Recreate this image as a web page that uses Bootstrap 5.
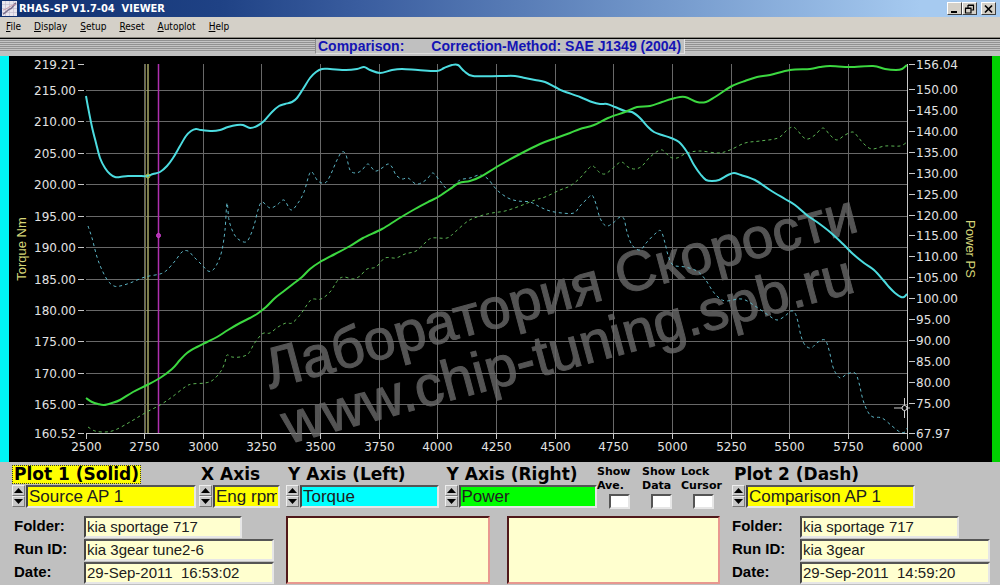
<!DOCTYPE html>
<html lang="en">
<head>
<meta charset="utf-8">
<meta name="viewport" content="width=device-width, initial-scale=1">
<title>RHAS-SP V1.7-04 VIEWER</title>
<link href="https://cdn.jsdelivr.net/npm/bootstrap@5.3.0/dist/css/bootstrap.min.css" rel="stylesheet">
<style>
body{background:#c0c0c0;color:#000;font-family:"Liberation Sans",Arial,sans-serif;min-height:100vh;overflow-x:hidden}
.titlebar{height:17px;padding-left:2px;gap:2px;background:linear-gradient(90deg,#10306f 0%,#1f4285 22%,#3a5d9f 36%,#7398cb 66%,#a6caf0 92%,#a6caf0 100%);font:bold 11px/17px "DejaVu Sans Condensed","DejaVu Sans",sans-serif;color:#fff;white-space:pre}
.win-btn{width:15px;height:13px;padding:0;background:#d4d0c8;border:1px solid;border-color:#fff #404040 #404040 #fff;line-height:0}
.win-btn svg,.spin button svg{display:block;margin:auto}
.menubar{height:21px;background:#d4d0c8;border-bottom:1px solid #8a877f;padding-left:6px;gap:13px;font:10px/20px "DejaVu Sans Condensed","DejaVu Sans",sans-serif}
.menubar a{color:#000;text-decoration:none}
.strip{height:18px;border-top:1px solid #000;background:#c0c0c0}
.ridges{height:13px;background:repeating-linear-gradient(180deg,#c4c4c4 0 1px,#929292 1px 2px)}
.method{height:15px;padding:0 3px 0 2px;border-left:1px solid #8a8a8a;border-right:1px solid #e4e4e4;border-bottom:1px solid #dcdcdc;color:#1414b4;font-weight:bold;font-size:14px;line-height:14px;white-space:nowrap}
.method span:last-child{margin-left:27px}
.edge-l{width:9px;background:#00f6f6}
.edge-r{width:8px;background:#00d000}
.plot{background:#000}
.plot svg{display:block;width:100%;height:auto}
.plot text{fill:#e2e2e2;font:12px "DejaVu Sans",sans-serif}
.plot .axis-name{fill:#d6d678;font:13px "Liberation Sans",sans-serif}
.plot .wm{fill:#6a6a6a;stroke:#6a6a6a;stroke-width:1;opacity:.8;font:57px "Liberation Sans",sans-serif}
.grid-line{stroke:#686868;stroke-width:1}
.axis-line{stroke:#c8c8c8;stroke-width:1}
.curve{fill:none;stroke-width:2;stroke-linejoin:round}
.dashed{stroke-width:1;stroke-dasharray:3 3}
.panel{display:grid;grid-template-columns:268fr 440fr 258fr;column-gap:6px;row-gap:7px;padding:3px 10px 1px 12px}
.rings-left{gap:3px}
.ring-name{height:19px;margin-bottom:1px;font:bold 17px/18px "DejaVu Sans",sans-serif;white-space:nowrap;display:block}
.ring-name span{display:inline-block;height:19px;padding:0 2px}
.ring-name .picked{background:#ff0;outline:1px dotted #333;outline-offset:-1px}
.spin{width:14px;flex:none}
.spin button{display:block;width:13px;height:11px;padding:0;background:#c8c8c8;border:1px solid;border-color:#eee #777 #777 #eee}
.sunk{border:2px solid;border-color:#555 #e6e6e6 #e6e6e6 #444;border-radius:0;color:#202020;min-width:0;width:100%}
.ring-value{height:23px;font-size:17px;padding:0 1px}
.f-yellow{background:#ff0}.f-cyan{background:#0ff}.f-green{background:#0f0}
.w-plot{flex:184 1 0;min-width:0}.w-x{flex:81 1 0;min-width:0}.w-checks{flex:129 1 0;min-width:0}
.w-pair{flex:311 1 0;min-width:0;display:grid;grid-template-columns:1fr 1fr;column-gap:6px}
.w-rest{flex:75 1 0}
.checks{display:grid;grid-template-columns:45fr 39fr 45fr;font:bold 11px/14px "DejaVu Sans",sans-serif}
.checks label{white-space:nowrap;margin-bottom:1px}
.tick{appearance:none;width:21px;height:15px;margin:0 auto;background:#fff;border:2px solid;border-color:#555 #e6e6e6 #e6e6e6 #555;display:block}
.tick:checked{background:#333}
.info{display:grid;grid-template-columns:72fr 158fr 32fr 6fr;row-gap:1px;font-size:15px}
.info.right{grid-template-columns:68fr 159fr 31fr 0fr}
.info label{grid-column:1;font-weight:bold;line-height:20px;padding-left:2px;white-space:nowrap}
.info.right label{padding-left:0}
.info input{height:22px;background:#ffffcf;padding:0 1px;font-size:15px;grid-column:2/4}
.info input.short{grid-column:2/3}
.notes{display:grid;grid-template-columns:205fr 214fr;column-gap:17px;margin-right:6px}
.notes textarea{resize:none;background:#ffffcf;border:2px solid;border-color:#50181a #e89890 #e89890 #50181a;border-radius:0;height:68px;width:100%;display:block}
</style>
</head>
<body>
<header>
  <div class="titlebar d-flex align-items-center">
    <svg class="flex-shrink-0" width="15" height="15" viewBox="0 0 15 15" aria-hidden="true">
      <rect width="15" height="15" fill="#e9e6ee"/><path d="M3.500 0V15M7.500 0V15M11.500 0V15M0 3.500H15M0 7.500H15M0 11.500H15" stroke="#bdb8cc" stroke-width=".6"/>
      <path d="M1 13C4 12 5 9 8 8S11 4 14 2" fill="none" stroke="#7b6f8c" stroke-width="1.600"/><path d="M1 9C4 9 6 6 9 5S12 3 14 4" fill="none" stroke="#c99aa8"/>
    </svg>
    <span>RHAS-SP V1.7-04  VIEWER</span>
    <div class="ms-auto d-flex pe-1">
      <button class="win-btn" aria-label="Minimize"><svg width="11" height="10" viewBox="0 0 11 10"><path d="M2 8H8" stroke="#000" stroke-width="2"/></svg></button>
      <button class="win-btn me-1" aria-label="Restore"><svg width="11" height="10" viewBox="0 0 11 10"><path d="M4 4V1.500H9.500V6H7.500M4 1H10" fill="none" stroke="#000" stroke-width="1.200"/><path d="M1.500 4.500H7V9H1.500ZM1 4H7.500" fill="none" stroke="#000" stroke-width="1.200"/></svg></button>
      <button class="win-btn" aria-label="Close"><svg width="11" height="10" viewBox="0 0 11 10"><path d="M2 1.500L9 8.500M9 1.500L2 8.500" stroke="#000" stroke-width="1.700"/></svg></button>
    </div>
  </div>
  <nav class="menubar d-flex">
    <a href="#"><u>F</u>ile</a><a href="#"><u>D</u>isplay</a><a href="#"><u>S</u>etup</a><a href="#"><u>R</u>eset</a><a href="#"><u>A</u>utoplot</a><a href="#"><u>H</u>elp</a>
  </nav>
  <div class="strip d-flex">
    <div class="ridges flex-grow-1"></div>
    <div class="method"><span>Comparison:</span><span>Correction-Method: SAE J1349 (2004)</span></div>
    <div class="ridges flex-grow-1"></div>
  </div>
</header>

<main>
  <div class="d-flex">
    <div class="edge-l"></div>
    <div class="plot flex-grow-1">
      <svg viewBox="9 56 983 406" role="img" aria-label="Torque and power against engine rpm">
        <g id="grid"></g>
        <path d="M145.500 64V433" stroke="#6e6e3c"/><path d="M148 64V433" stroke="#a8a868" stroke-width="1.500"/>
        <path d="M158.500 64V433" stroke="#b030b0" stroke-width="1.500"/>
        <text class="wm" transform="translate(270 389) rotate(-15)">Лаборатория Скорости</text>
        <text class="wm" transform="translate(288 444) rotate(-15)">www.chip-tuning.spb.ru</text>
        <g id="curves"></g>
        <circle cx="148" cy="176" r="2" fill="none" stroke="#b4c850"/>
        <circle cx="158.500" cy="235.500" r="2" fill="#b030b0" stroke="#d040d0"/>
        <path d="M894 408H902M907 408H910M904.500 398V405.500M904.500 410.500V418" stroke="#ccc"/><circle cx="904.500" cy="408" r="2.500" fill="none" stroke="#ddd"/>
        <g id="labels"></g>
        <text class="axis-name" text-anchor="middle" transform="translate(26 249) rotate(-90)">Torque Nm</text>
        <text class="axis-name" text-anchor="middle" transform="translate(966 249) rotate(90)">Power PS</text>
      </svg>
    </div>
    <div class="edge-r"></div>
  </div>

  <form class="panel">
    <div class="d-flex rings-left">
      <div class="w-plot">
        <label class="ring-name" for="p1"><span class="picked">Plot 1 (Solid)</span></label>
        <div class="d-flex"><div class="spin"></div><input id="p1" class="sunk ring-value f-yellow" value="Source AP 1" readonly></div>
      </div>
      <div class="w-x">
        <label class="ring-name" for="xa"><span>X Axis</span></label>
        <div class="d-flex"><div class="spin"></div><input id="xa" class="sunk ring-value f-yellow" value="Eng rpm" readonly></div>
      </div>
    </div>
    <div class="d-flex">
      <div class="w-pair">
        <div>
          <label class="ring-name" for="yl"><span>Y Axis (Left)</span></label>
          <div class="d-flex"><div class="spin"></div><input id="yl" class="sunk ring-value f-cyan" value="Torque" readonly></div>
        </div>
        <div>
          <label class="ring-name" for="yr"><span>Y Axis (Right)</span></label>
          <div class="d-flex"><div class="spin"></div><input id="yr" class="sunk ring-value f-green" value="Power" readonly></div>
        </div>
      </div>
      <div class="w-checks checks">
        <div><label for="c1">Show<br>Ave.</label><input id="c1" class="tick" type="checkbox"></div>
        <div><label for="c2">Show<br>Data</label><input id="c2" class="tick" type="checkbox"></div>
        <div><label for="c3">Lock<br>Cursor</label><input id="c3" class="tick" type="checkbox"></div>
      </div>
    </div>
    <div class="d-flex">
      <div class="w-plot">
        <label class="ring-name" for="p2"><span>Plot 2 (Dash)</span></label>
        <div class="d-flex"><div class="spin"></div><input id="p2" class="sunk ring-value f-yellow" value="Comparison AP 1" readonly></div>
      </div>
      <div class="w-rest"></div>
    </div>

    <div class="info">
      <label for="f1">Folder:</label><input id="f1" class="sunk short" value="kia sportage 717">
      <label for="r1">Run ID:</label><input id="r1" class="sunk" value="kia 3gear tune2-6">
      <label for="d1">Date:</label><input id="d1" class="sunk" value="29-Sep-2011  16:53:02">
    </div>
    <div class="notes">
      <textarea aria-label="Source notes"></textarea>
      <textarea aria-label="Comparison notes"></textarea>
    </div>
    <div class="info right">
      <label for="f2">Folder:</label><input id="f2" class="sunk short" value="kia sportage 717">
      <label for="r2">Run ID:</label><input id="r2" class="sunk" value="kia 3gear">
      <label for="d2">Date:</label><input id="d2" class="sunk" value="29-Sep-2011  14:59:20">
    </div>
  </form>
</main>

<script src="https://cdn.jsdelivr.net/npm/bootstrap@5.3.0/dist/js/bootstrap.bundle.min.js"></script>
<script>
// Spin arrows beside each ring control
document.querySelectorAll('.spin').forEach(s => {
  s.innerHTML = '<button type="button" aria-label="Previous"><svg width="9" height="5" viewBox="0 0 9 5"><path d="M4.500 0L9 5H0Z"/></svg></button>' +
    '<button type="button" aria-label="Next"><svg width="9" height="5" viewBox="0 0 9 5"><path d="M4.500 5L9 0H0Z"/></svg></button>';
});

// Grid, ticks and axis labels
const L = 86, R = 907, T = 64, B = 433;
let grid = '', labels = '';
for (let i = 0; i <= 14; i++) {
  const x = Math.floor(L + i * (R - L) / 14) + 0.5;
  if (i > 0 && i < 14) grid += `<path class="grid-line" d="M${x} ${T}V${B}"/>`;
  grid += `<path class="axis-line" d="M${x} ${B}V${B + 6}"/>`;
  labels += `<text x="${x}" y="451" text-anchor="middle">${2500 + i * 250}</text>`;
}
const yLeft = v => T + (219.21 - v) * (B - T) / (219.21 - 160.52);
const yRight = v => T + (156.04 - v) * (B - T) / (156.04 - 67.97);
[219.21, 215, 210, 205, 200, 195, 190, 185, 180, 175, 170, 165, 160.52].forEach(v => {
  const y = Math.floor(yLeft(v)) + 0.5;
  if (v % 5 === 0) grid += `<path class="grid-line" d="M${L} ${y}H${R}"/>`;
  grid += `<path class="axis-line" d="M78 ${y}H84"/>`;
  labels += `<text x="76" y="${y + 4}" text-anchor="end">${v.toFixed(2)}</text>`;
});
[156.04, 150, 145, 140, 135, 130, 125, 120, 115, 110, 105, 100, 95, 90, 85, 80, 75, 67.97].forEach(v => {
  const y = Math.floor(yRight(v)) + 0.5;
  grid += `<path class="axis-line" d="M909 ${y}H915"/>`;
  labels += `<text x="916" y="${y + 4}">${v.toFixed(2)}</text>`;
});
grid += `<path class="axis-line" d="M${L} ${B + .5}H${R + .5}V${T}" fill="none"/>`;
document.getElementById('grid').innerHTML = grid;
document.getElementById('labels').innerHTML = labels;

// Measured runs, drawn as smooth curves
const runs = [
 ['#5cb4c4', 'dashed', '88,226 92,238 97,257 102,270 108,281 114,286 120,286 130,283 145,277 160,274 167,270 175,261 182,252 188,251 194,257 202,265 208,271 213,270 218,262 222,250 225,230 227,203 229,220 233,232 238,239 246,242 251,234 255,222 258,210 262,202 270,208 277,205 284,200 291,210 298,203 304,192 309,175 312,172 318,181 325,183 330,176 337,160 342,152 346,155 350,170 356,173 362,170 368,164 375,171 382,168 388,164 392,167 396,175 402,179 408,178 416,184 423,182 428,178 433,173 440,181 447,189 452,187 460,180 470,178 480,175 488,179 497,190 508,198 518,201 530,202 540,207 550,211 562,213 574,213 580,206 588,198 592,195 596,204 600,218 606,226 613,223 620,217 624,219 627,232 632,245 640,250 647,242 656,233 661,231 665,243 668,255 673,265 685,267 697,271 705,279 712,290 718,297 726,301 742,299 755,306 768,315 777,320 785,316 791,311 795,313 798,322 801,336 805,345 811,348 818,342 825,340 829,350 833,367 837,375 841,378 847,374 855,373 859,383 863,400 868,412 873,417 882,418 892,426 900,432 905,432 907,428'],
 ['#5cb454', 'dashed', '88,427 95,431 105,432 115,430 130,422 145,413 160,405 172,397 185,387 192,384 205,383 213,380 221,371 225,362 227,355 232,357 240,357 248,354 254,344 260,336 264,333 270,333 278,327 286,323 292,323 300,315 309,302 313,299 321,299 330,292 338,280 344,277 353,279 360,276 367,269 376,267 385,258 396,258 405,254 416,251 425,243 432,238 447,238 455,232 468,221 480,216 492,213 505,211 520,206 535,200 545,197 560,190 570,186 580,178 588,169 593,166 599,172 605,174 612,169 621,162 628,167 635,169 642,166 650,157 660,150 665,152 670,157 677,158 687,153 700,151 718,153 730,150 745,143 760,141 778,138 787,130 793,127 798,131 803,137 808,139 815,135 823,128 830,135 837,140 845,135 853,132 858,137 864,144 872,149 885,146 900,146 907,142'],
 ['#4cdce0', '', '86,96 88,107 92,127 96,143 100,158 105,168 110,174 115,177 120,177 128,176 138,176 147,176 153,174 160,172 167,166 173,158 180,146 186,136 191,131 196,129 201,130 212,131 220,130 228,127 237,125 243,125 250,128 257,126 264,121 272,112 279,106 285,104 292,102 297,98 303,89 310,78 316,72 322,69 330,69 346,70 357,69 364,67 370,70 380,73 392,70 402,69 418,70 437,71 444,68 452,65 458,65 464,71 473,76 500,76 515,76 525,78 535,80 545,82 555,87 563,91 580,97 592,102 600,104 607,104 615,107 625,111 632,112 640,118 648,127 654,132 662,135 671,138 679,142 687,152 694,165 701,175 706,180 712,181 719,180 728,175 734,173 741,175 755,180 770,190 785,199 795,205 808,216 817,222 830,232 843,244 853,254 864,263 874,270 884,281 889,287 895,293 901,297 904,297 907,294'],
 ['#3cd840', '', '86,398 92,402 98,404 104,405 112,403 120,400 133,392 147,385 160,378 172,369 180,360 187,353 197,347 207,342 217,337 228,330 240,323 250,318 257,314 266,307 275,298 284,291 293,284 302,277 310,269 320,262 335,254 350,246 363,238 382,229 398,219 415,209 430,201 438,197 450,189 459,183 470,181 480,177 500,165 520,154 540,144 556,138 570,133 580,129 594,125 608,118 625,112 637,107 650,106 662,102 675,98 685,97 697,102 706,102 715,97 724,91 732,86 745,81 757,77 770,75 790,70 810,69 820,67 830,66 850,67 873,66 885,69 896,70 902,69 907,65']
];
// Catmull-Rom spline through the samples
function spline(s) {
  const p = s.split(' ').map(q => q.split(',').map(n => +n));
  let d = 'M' + p[0];
  for (let i = 0; i < p.length - 1; i++) {
    const a = p[i - 1] || p[i], b = p[i], c = p[i + 1], e = p[i + 2] || c;
    d += `C${b[0] + (c[0] - a[0]) / 6} ${b[1] + (c[1] - a[1]) / 6} ${c[0] - (e[0] - b[0]) / 6} ${c[1] - (e[1] - b[1]) / 6} ${c[0]} ${c[1]}`;
  }
  return d;
}
document.getElementById('curves').innerHTML =
  runs.map(r => `<path class="curve ${r[1]}" stroke="${r[0]}" d="${spline(r[2])}"/>`).join('');
</script>
</body>
</html>
